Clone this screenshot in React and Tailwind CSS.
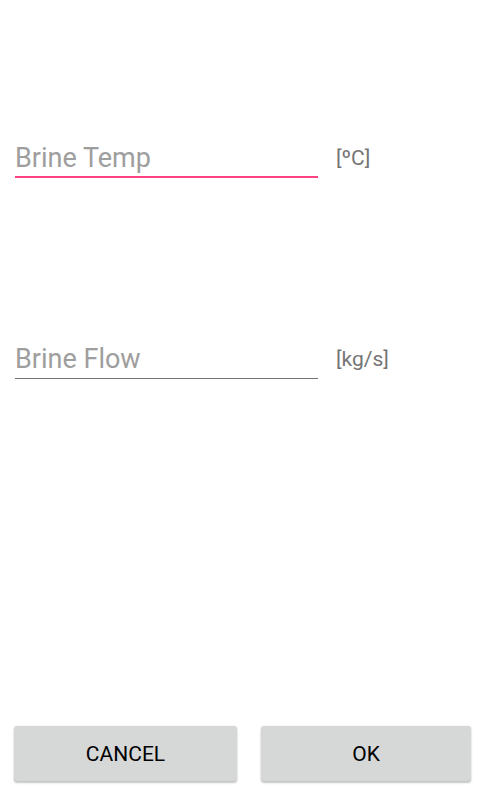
import React from "react";

const font = { fontFamily: "Roboto, 'Liberation Sans', sans-serif" };

function Field({ hint, unit, focused }) {
  return (
    <div className="flex items-start">
      <div
        className={
          focused
            ? "w-[303px] pt-[2px] pb-[2px] border-b-2 border-[#ff4081]"
            : "w-[303px] pt-[2px] pb-[3px] border-b border-[#757575]"
        }
      >
        <span className="block text-[27px] leading-8 text-[#9e9e9e]">{hint}</span>
      </div>
      <span className="ml-[18px] mt-[3px] text-[21px] leading-[31px] text-[#757575]">{unit}</span>
    </div>
  );
}

export default function App() {
  return (
    <div className="h-[800px] w-[488px] bg-white flex flex-col" style={font}>
      {/* Inputs */}
      <div className="pl-[15px] pt-[140px]">
        <Field hint="Brine Temp" unit="[ºC]" focused />
      </div>
      <div className="pl-[15px] pt-[163px]">
        <Field hint="Brine Flow" unit="[kg/s]" />
      </div>

      {/* Buttons */}
      <div className="mt-auto flex pl-[14px] pb-[19px]">
        <button className="w-[223px] h-[55px] pt-[3px] rounded-[3px] bg-[#d6d7d7] text-[21px] font-normal text-black shadow-[0_2px_2px_rgba(0,0,0,0.22),0_0_2px_rgba(0,0,0,0.1)]">
          CANCEL
        </button>
        <button className="ml-[24px] w-[210px] h-[55px] pt-[3px] rounded-[3px] bg-[#d6d7d7] text-[21px] font-normal text-black shadow-[0_2px_2px_rgba(0,0,0,0.22),0_0_2px_rgba(0,0,0,0.1)]">
          OK
        </button>
      </div>
    </div>
  );
}
